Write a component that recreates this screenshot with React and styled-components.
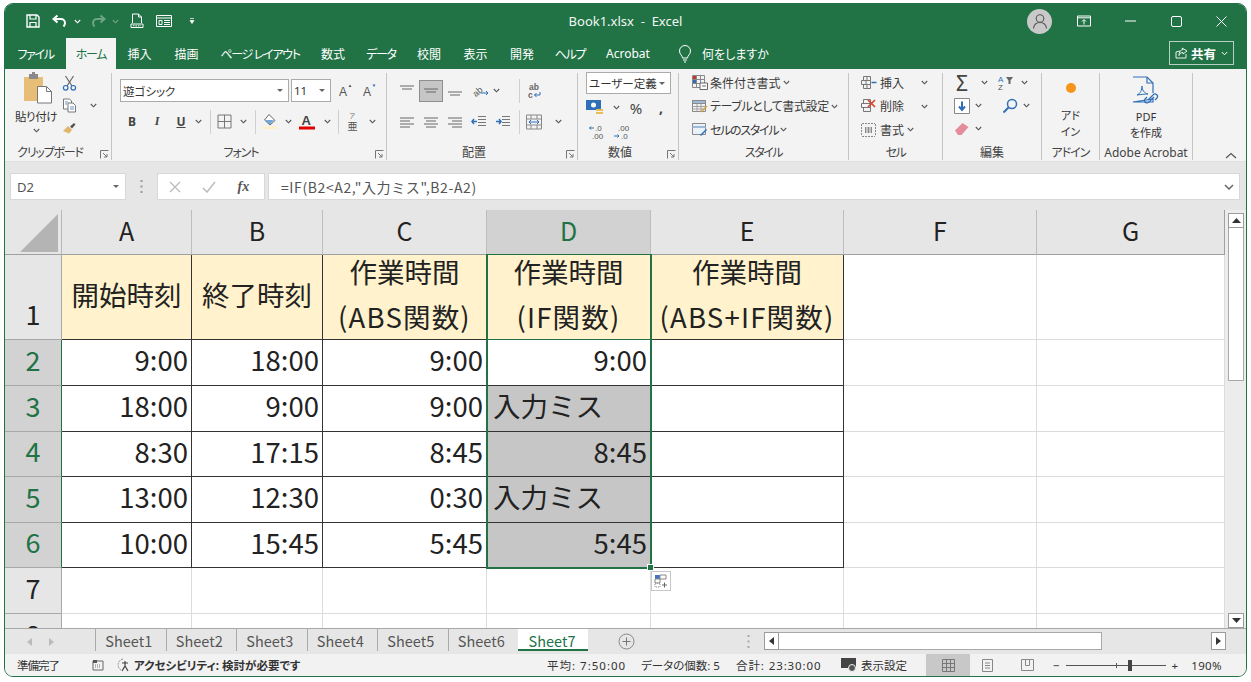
import React from "react";
import styled, { createGlobalStyle } from "styled-components";

const GREEN = "#217346";

const Global = createGlobalStyle`
  html, body { margin: 0; padding: 0; background: #fff; overflow: hidden; }
  body { font-family: "Noto Sans", "Noto Sans CJK JP", sans-serif; font-feature-settings: "palt"; }
`;

const Win = styled.div`
  width: 1243px;
  height: 674px;
  margin: 3px 0 0 4px;
  box-sizing: border-box;
  border: 1px solid ${GREEN};
  border-radius: 9px;
  overflow: hidden;
  display: flex;
  flex-direction: column;
  background: #e6e6e6;
`;

/* title bar */
const TitleBar = styled.div`
  height: 34px;
  flex: none;
  background: ${GREEN};
  color: #fff;
  display: grid;
  grid-template-columns: 1fr auto 1fr;
  align-items: center;
`;
const Qat = styled.div`
  display: flex;
  align-items: center;
  padding-left: 19px;
`;
const QatSlot = styled.span`
  width: ${(p) => p.$w}px;
  display: flex;
  justify-content: center;
  align-items: center;
  opacity: ${(p) => (p.$off ? 0.35 : 1)};
`;
const Title = styled.div`
  font-size: 13px;
  white-space: pre;
  color: #f2f7f4;
`;
const WinBtns = styled.div`
  display: flex;
  justify-content: flex-end;
  align-items: center;
`;
const Avatar = styled.span`
  width: 25px;
  height: 25px;
  border-radius: 50%;
  background: #c9c9c9;
  display: flex;
  align-items: center;
  justify-content: center;
  margin-right: 9px;
`;
const WinBtn = styled.span`
  width: 46px;
  display: flex;
  justify-content: center;
  align-items: center;
  &:last-child { width: 44px; padding-right: 3px; }
`;

/* ribbon tabs */
const TabBar = styled.div`
  height: 31px;
  flex: none;
  background: ${GREEN};
  display: flex;
  align-items: stretch;
`;
const RibTab = styled.div`
  width: ${(p) => p.$w}px;
  font-size: 12px;
  display: flex;
  align-items: center;
  justify-content: center;
  white-space: pre;
  letter-spacing: ${(p) => (p.$tight ? "-1.300px" : "0")};
  color: ${(p) => (p.$active ? GREEN : "#fff")};
  background: ${(p) => (p.$active ? "#f3f3f3" : "transparent")};
`;
const TellMe = styled.div`
  display: flex;
  align-items: center;
  gap: 10px;
  margin-left: 17px;
  font-size: 12px;
  color: #fff;
`;
const Share = styled.div`
  margin: 3px 12px 4px auto;
  width: 65px;
  box-sizing: border-box;
  border: 1px solid #b7d0c2;
  display: flex;
  align-items: center;
  justify-content: center;
  gap: 3px;
  color: #fff;
  font-size: 12.5px;
  font-weight: 700;
`;

/* ribbon body */
const Ribbon = styled.div`
  height: 93px;
  flex: none;
  background: #f3f3f3;
  display: flex;
  color: #333;
  font-size: 12px;
  position: relative;
  box-shadow: inset 0 -1px 0 #e0e0e0;
`;
const Group = styled.div`
  width: ${(p) => p.$w}px;
  flex: none;
  box-sizing: border-box;
  margin: 4px 0 2px;
  border-right: 1px solid #c4c4c4;
  display: flex;
  flex-direction: column;
  position: relative;
`;
const GroupBody = styled.div`
  flex: 1;
  min-height: 0;
  display: flex;
  flex-direction: ${(p) => p.$dir || "column"};
  padding: ${(p) => p.$pad || "0"};
  margin-top: ${(p) => p.$mt || 0}px;
  gap: ${(p) => p.$gap || 0}px;
`;
const GroupFoot = styled.div`
  height: 14px;
  line-height: 14px;
  font-size: 12px;
  text-align: center;
  color: #444;
  white-space: nowrap;
  position: relative;
  padding-right: ${(p) => p.$pr || 0}px;
  letter-spacing: ${(p) => p.$track || 0}px;
`;
const Launcher = styled.span`
  position: absolute;
  right: 2px;
  bottom: 1px;
  display: flex;
`;
const Row = styled.div`
  display: flex;
  align-items: center;
  height: ${(p) => p.$h || 23}px;
  margin-top: ${(p) => p.$mt || 0}px;
`;
const Slot = styled.span`
  width: ${(p) => p.$w}px;
  height: 22px;
  flex: none;
  display: flex;
  align-items: center;
  justify-content: center;
  background: ${(p) => (p.$on ? "#c6c6c6" : "transparent")};
  box-shadow: ${(p) => (p.$on ? "inset 0 0 0 1px #8f8f8f" : "none")};
  font-family: ${(p) => (p.$serif ? '"Liberation Serif", serif' : "inherit")};
  font-weight: ${(p) => (p.$bold ? 700 : 400)};
  font-style: ${(p) => (p.$italic ? "italic" : "normal")};
  text-decoration: ${(p) => (p.$under ? "underline" : "none")};
  font-size: ${(p) => p.$size || 12}px;
  color: #444;
`;
const VSep = styled.span`
  width: 1px;
  height: 24px;
  background: #d0d0d0;
  flex: none;
  margin: 0 ${(p) => p.$m || 0}px;
`;
const Select = styled.div`
  width: ${(p) => p.$w}px;
  height: ${(p) => p.$h || 23}px;
  box-sizing: border-box;
  flex: none;
  margin-left: ${(p) => p.$ml || 0}px;
  background: #fff;
  border: 1px solid #ababab;
  display: flex;
  align-items: center;
  justify-content: space-between;
  padding: 0 5px 0 2px;
  font-size: 11.5px;
  color: #333;
  white-space: nowrap;
`;
const Caret = styled.i`
  width: 0;
  height: 0;
  border-left: 3px solid transparent;
  border-right: 3px solid transparent;
  border-top: 3px solid #666;
`;
const PasteCol = styled.div`
  width: 48px;
  margin-left: 7px;
  flex: none;
  display: flex;
  flex-direction: column;
  align-items: center;
  font-size: 11.5px;
  white-space: nowrap;
  color: #333;
`;
const PasteFace = styled.span`
  display: flex;
  margin-left: 4px;
`;
const PasteLabel = styled.span`
  margin-top: 5px;
  line-height: 16px;
  margin-bottom: 3px;
  letter-spacing: -0.4px;
`;
const ToolCol = styled.div`
  display: flex;
  flex-direction: column;
`;
const TextRow = styled.div`
  height: 23.5px;
  flex: none;
  display: flex;
  align-items: center;
  gap: ${(p) => p.$gap || 2}px;
  white-space: nowrap;
  font-size: 12px;
  color: #3a3a3a;
  letter-spacing: ${(p) => p.$track || 0}px;
`;
const Stacked = styled.div`
  display: flex;
  flex-direction: column;
  align-items: center;
  font-size: 11px;
  line-height: 16px;
  color: #333;
  padding-top: ${(p) => p.$top}px;
`;
const StackGap = styled.span`
  height: ${(p) => p.$h}px;
`;
const Collapse = styled.span`
  position: absolute;
  right: 9px;
  bottom: 3px;
  display: flex;
`;

/* formula bar */
const FormulaBand = styled.div`
  height: 48px;
  flex: none;
  background: #e6e6e6;
  display: flex;
  align-items: flex-start;
  padding: 11px 6px 0 5px;
  box-sizing: border-box;
`;
const NameBox = styled.div`
  width: 116px;
  height: 27px;
  box-sizing: border-box;
  background: #fff;
  border: 1px solid #d8d8d8;
  display: flex;
  align-items: center;
  justify-content: space-between;
  padding: 0 6px;
  font-size: 13px;
  color: #555;
`;
const Dots = styled.span`
  width: 31px;
  height: 27px;
  display: flex;
  align-items: center;
  justify-content: center;
`;
const FxBox = styled.div`
  width: 108px;
  height: 27px;
  box-sizing: border-box;
  background: #fff;
  border: 1px solid #d8d8d8;
  display: flex;
  align-items: center;
  justify-content: space-around;
  padding: 0 4px 0 0;
  color: #666;
`;
const FxLabel = styled.span`
  font-family: "Liberation Serif", serif;
  font-style: italic;
  font-weight: 700;
  font-size: 14px;
  color: #555;
`;
const FormulaInput = styled.div`
  flex: 1;
  height: 27px;
  margin-left: 3px;
  box-sizing: border-box;
  background: #fff;
  border: 1px solid #d8d8d8;
  display: flex;
  align-items: center;
  justify-content: space-between;
  padding: 0 5px 0 12px;
  font-family: "Noto Sans CJK JP", sans-serif;
  font-feature-settings: normal;
  font-size: 14px;
  letter-spacing: 0.6px;
  color: #555;
`;

/* sheet */
const SheetArea = styled.div`
  height: 418px;
  flex: none;
  display: flex;
  background: #e6e6e6;
`;
const SheetGrid = styled.div`
  width: 1220px;
  flex: none;
  display: grid;
  grid-template-columns: ${(p) => p.$cols};
  grid-template-rows: ${(p) => p.$rows};
  overflow: hidden;
  position: relative;
  background: #fff;
  font-family: "Noto Sans CJK JP", sans-serif;
  font-feature-settings: normal;
  color: #222;
`;
const Corner = styled.div`
  background: #e6e6e6;
  border-right: 1px solid #b8b8b8;
  border-bottom: 1px solid #a0a0a0;
  display: flex;
  align-items: flex-end;
  justify-content: flex-end;
  padding: 0 3px 2px 0;
`;
const ColHead = styled.div`
  background: ${(p) => (p.$sel ? "#d2d2d2" : "#e6e6e6")};
  color: ${(p) => (p.$sel ? GREEN : "#222")};
  border-right: 1px solid ${(p) => (p.$last ? "#a0a0a0" : "#bdbdbd")};
  border-bottom: 1px solid ${(p) => (p.$sel ? GREEN : "#a0a0a0")};
  box-sizing: border-box;
  padding-bottom: 4px;
  font-size: 25px;
  display: flex;
  align-items: center;
  justify-content: center;
`;
const RowHead = styled.div`
  background: ${(p) => (p.$sel ? "#d2d2d2" : "#e6e6e6")};
  color: ${(p) => (p.$sel ? GREEN : "#222")};
  border-right: 1px solid ${(p) => (p.$sel ? GREEN : "#a8a8a8")};
  border-bottom: 1px solid #a8a8a8;
  font-size: 27px;
  line-height: 42px;
  padding-bottom: ${(p) => (p.$bottom ? 4 : 6)}px;
  display: flex;
  align-items: ${(p) => (p.$bottom ? "flex-end" : "center")};
  justify-content: center;
  box-sizing: border-box;
`;
const Cell = styled.div`
  box-sizing: border-box;
  background: ${(p) => p.$bg};
  border-right: 1px solid ${(p) => p.$line};
  border-bottom: 1px solid ${(p) => p.$line};
  font-size: 27.5px;
  line-height: 45px;
  white-space: nowrap;
  display: flex;
  flex-direction: column;
  justify-content: center;
  align-items: ${(p) => (p.$align === "right" ? "flex-end" : p.$align === "left" ? "flex-start" : "center")};
  padding: ${(p) => (p.$align === "right" ? "0 3px 6px 0" : p.$align === "left" ? "0 0 6px 6px" : "0 0 6px 0")};
`;
const HeadLine = styled.span`
  letter-spacing: ${(p) => (p.$wide ? "1.200px" : "0")};
`;
const Selection = styled.div`
  position: absolute;
  grid-column: 5 / 6;
  grid-row: 2 / 8;
  inset: -1px -1px -1px -1px;
  border: 2px solid ${GREEN};
  border-top-width: 1px;
  pointer-events: none;
`;
const FillHandle = styled.span`
  position: absolute;
  right: -4px;
  bottom: -4px;
  width: 5px;
  height: 5px;
  background: ${GREEN};
  border: 1px solid #fff;
`;
const QuickAnalysis = styled.span`
  position: absolute;
  left: 646px;
  top: 361px;
  width: 20px;
  height: 20px;
  box-sizing: border-box;
  background: #fff;
  border: 1px solid #c8c8c8;
  display: flex;
  align-items: center;
  justify-content: center;
`;

const VScroll = styled.div`
  flex: 1;
  display: flex;
  flex-direction: column;
  padding: 3px 2px 0 3px;
  background: #ececec;
`;
const ScrollBtn = styled.span`
  height: 15px;
  flex: none;
  box-sizing: border-box;
  background: #fff;
  border: 1px solid #9c9c9c;
  display: flex;
  align-items: center;
  justify-content: center;
`;
const VThumb = styled.span`
  height: 153px;
  box-sizing: border-box;
  background: #fff;
  border: 1px solid #a8a8a8;
  border-top: none;
  flex: none;
`;
const Spacer = styled.span`
  flex: 1;
`;

/* sheet tabs */
const SheetTabs = styled.div`
  height: 26px;
  flex: none;
  background: #e6e6e6;
  border-top: 1px solid #a8a8a8;
  box-sizing: border-box;
  display: flex;
  align-items: stretch;
  font-size: 14px;
  color: #555;
`;
const TabNav = styled.div`
  width: 90px;
  flex: none;
  display: flex;
  align-items: center;
  gap: 17px;
  padding-left: 22px;
  box-sizing: border-box;
`;
const SheetTab = styled.div`
  width: ${(p) => p.$w}px;
  flex: none;
  display: flex;
  align-items: center;
  justify-content: center;
  box-sizing: border-box;
  margin-bottom: 3px;
  padding-right: ${(p) => (p.$active ? 2 : 4)}px;
  border-left: ${(p) => (p.$active ? "none" : "1px solid #aaa")};
  background: ${(p) => (p.$active ? "#fff" : "transparent")};
  color: ${(p) => (p.$active ? GREEN : "#555")};
  box-shadow: ${(p) => (p.$active ? `inset 0 -2px 0 ${GREEN}` : "none")};
  font-family: "Noto Sans CJK JP", sans-serif;
  font-feature-settings: normal;
  font-size: 14.5px;
`;
const AddSheet = styled.span`
  width: 76px;
  flex: none;
  display: flex;
  align-items: center;
  justify-content: center;
`;
const TabDots = styled.span`
  width: 32px;
  flex: none;
  margin-left: 68px;
  display: flex;
  align-items: center;
  justify-content: center;
`;
const HScroll = styled.div`
  flex: none;
  width: 462px;
  display: flex;
  align-items: center;
  margin-top: -1px;
`;
const HBtn = styled.span`
  width: 15px;
  height: 18px;
  flex: none;
  box-sizing: border-box;
  background: #fff;
  border: 1px solid #9c9c9c;
  display: flex;
  align-items: center;
  justify-content: center;
`;
const HThumb = styled.span`
  width: 323px;
  height: 18px;
  box-sizing: border-box;
  background: #fff;
  border: 1px solid #a8a8a8;
  border-left: none;
  flex: none;
`;

/* status bar */
const StatusBar = styled.div`
  flex: 1;
  min-height: 0;
  background: #f2f2f2;
  display: flex;
  align-items: center;
  font-size: 11.5px;
  color: #333;
  white-space: nowrap;
`;
const StatusItem = styled.span`
  margin-left: ${(p) => p.$ml || 0}px;
  width: ${(p) => (p.$w ? `${p.$w}px` : "auto")};
  flex: none;
  display: flex;
  align-items: center;
  gap: ${(p) => p.$gap || 0}px;
  font-weight: ${(p) => (p.$bold ? 700 : 400)};
  letter-spacing: ${(p) => p.$track || 0}px;
`;
const ViewBtn = styled.span`
  width: ${(p) => p.$w || 40}px;
  align-self: stretch;
  flex: none;
  display: flex;
  align-items: center;
  justify-content: center;
  background: ${(p) => (p.$on ? "#c8c8c8" : "transparent")};
`;
const Zoom = styled.div`
  width: 100px;
  height: 1px;
  background: #555;
  position: relative;
  margin: 0 6px;
  flex: none;
`;
const ZoomMark = styled.span`
  position: absolute;
  left: 50px;
  top: -2px;
  width: 1px;
  height: 5px;
  background: #555;
`;
const ZoomThumb = styled.span`
  position: absolute;
  left: 62px;
  top: -5px;
  width: 4px;
  height: 11px;
  background: #444;
`;

/* icons */
const Svg = ({ w = 16, h = 16, children, ...rest }) => (
  <svg width={w} height={h} viewBox={`0 0 ${w} ${h}`} fill="none" style={{ flex: "none" }} {...rest}>
    {children}
  </svg>
);
const Chev = ({ c = "#555" }) => (
  <Svg w={7} h={5}>
    <path d="M.8 1 3.500 3.800 6.200 1" stroke={c} strokeWidth="1.100" />
  </Svg>
);
const Lines = ({ rows }) => (
  <Svg w={16} h={14}>
    {rows.map(([x1, x2, y], i) => (
      <path key={i} d={`M${x1} ${y}H${x2}`} stroke="#666" />
    ))}
  </Svg>
);
const Launch = () => (
  <Svg w={9} h={9}>
    <path d="M.5 8.500V.5h8M3 3l4 4M7 4v3H4" stroke="#777" />
  </Svg>
);

const SaveIcon = () => (
  <Svg w={14} h={14}>
    <path d="M1 1h10l2 2v10H1z" stroke="#fff" strokeWidth="1.400" />
    <path d="M4 1v4h6V1M4 13V8.500h6V13" stroke="#fff" strokeWidth="1.200" />
  </Svg>
);
const UndoIcon = ({ c = "#fff" }) => (
  <Svg w={16} h={14}>
    <path d="M5.500 1.500 1.500 5l4 3.500" stroke={c} strokeWidth="2" />
    <path d="M2 5h7a4 4 0 0 1 4 4c0 1.500-.6 2.500-1.500 3.500" stroke={c} strokeWidth="2" />
  </Svg>
);
const PreviewIcon = () => (
  <Svg w={14} h={16}>
    <path d="M2.500 10V1h6l3 3v6M8.500 1v3h3" stroke="#fff" />
    <path d="M1 11h12v3.500H1z" stroke="#fff" />
    <path d="M3 12.800h8" stroke="#fff" strokeDasharray="1.500 1" />
  </Svg>
);
const FormIcon = () => (
  <Svg w={16} h={14}>
    <path d="M.5 1.500h15v11H.5z" stroke="#fff" />
    <path d="M.5 4h15M3 6.500h3v4H3zM8 6.500h6M8 8.500h6M8 10.500h6" stroke="#fff" />
  </Svg>
);
const PasteIcon = () => (
  <Svg w={30} h={33}>
    <path d="M1 6h19v24H1z" fill="#e8bd78" />
    <path d="M6 3h9v5H6z" fill="#8a8a8a" />
    <path d="M9 1h3v3H9z" fill="#8a8a8a" />
    <path d="M14.500 15.500h9l5 5v11.500h-14z" fill="#fff" stroke="#777" />
    <path d="M23.500 15.500v5h5" stroke="#777" />
  </Svg>
);
const ScissorsIcon = () => (
  <Svg w={15} h={16}>
    <path d="m3.500 1 6.500 10M11.500 1 5 11" stroke="#666" strokeWidth="1.200" />
    <circle cx="3.700" cy="12.800" r="2.300" stroke="#2f6fb7" strokeWidth="1.200" />
    <circle cx="11.300" cy="12.800" r="2.300" stroke="#2f6fb7" strokeWidth="1.200" />
  </Svg>
);
const CopyIcon = () => (
  <Svg w={15} h={15}>
    <path d="M1.500 1h6l2 2v8h-8z" fill="#fff" stroke="#777" />
    <path d="M6 5h5l2.500 2.500V14H6z" fill="#fff" stroke="#777" />
    <path d="M3 4h3M3 6h2M8 9h4M8 11h4" stroke="#6a93c4" />
  </Svg>
);
const BrushIcon = () => (
  <Svg w={15} h={13}>
    <path d="M1 9 6 4l4 4-3 3.500z" fill="#e0b56c" />
    <path d="m8 4.500 4-3.500 1.500 1.500L10 6.500z" fill="#555" />
  </Svg>
);
const GrowA = ({ up }) => (
  <Svg w={15} h={15}>
    <text x="0" y="13" fontSize="12" fill="#555" fontFamily="Liberation Sans">A</text>
    <path d={up ? "M9.500 4 11 1.500 12.500 4z" : "M9.500 1.500 11 4l1.500-2.500z"} fill={up ? "#555" : "#2f6fb7"} />
  </Svg>
);
const BorderIcon = () => (
  <Svg w={15} h={15}>
    <path d="M1 1h13v13H1zM7.500 1v13M1 7.500h13" stroke="#777" />
  </Svg>
);
const FillIcon = () => (
  <Svg w={16} h={17}>
    <path d="m7 1.500 6 6-5 4.500-5.500-5z" fill="#fff" stroke="#666" />
    <path d="M3 7h9l-4 4.500z" fill="#6fa8dc" />
    <path d="M0 13.500h15V16H0z" fill="#fdf0c4" />
  </Svg>
);
const FontColorIcon = () => (
  <Svg w={16} h={17}>
    <text x="2.500" y="12" fontSize="13" fontWeight="700" fill="#444" fontFamily="Liberation Sans">A</text>
    <path d="M0 13.500h16V16.500H0z" fill="#e00000" />
  </Svg>
);
const PhoneticIcon = () => (
  <Svg w={13} h={20}>
    <text x="3.500" y="6" fontSize="6" fill="#666" fontFamily="Noto Sans CJK JP">ア</text>
    <text x="1.500" y="18" fontSize="10" fill="#555" fontFamily="Noto Sans CJK JP">亜</text>
  </Svg>
);
const OrientIcon = () => (
  <Svg w={18} h={16}>
    <text x="1" y="12" fontSize="9" fill="#555" transform="rotate(-40 6 8)" fontFamily="Liberation Sans">ab</text>
    <path d="M10 10h7m-2-2 2 2-2 2" stroke="#2f6fb7" />
  </Svg>
);
const WrapIcon = () => (
  <Svg w={15} h={18}>
    <text x="2" y="8" fontSize="8.500" fontWeight="700" fill="#666" fontFamily="Liberation Sans">ab</text>
    <text x="1" y="16" fontSize="8.500" fontWeight="700" fill="#666" fontFamily="Liberation Sans">c</text>
    <path d="M13 10v3H7.500m2-2-2 2 2 2" stroke="#2f6fb7" />
  </Svg>
);
const IndentIcon = ({ rev }) => (
  <Svg w={16} h={13}>
    <path d="M7 1.500h8M7 4.500h8M7 7.500h8M7 10.500h8" stroke="#777" />
    <path d={rev ? "M6 6.500H1m2-2.500-2 2.500 2 2.500" : "M1 6.500h5m-2-2.500 2 2.500-2 2.500"} stroke="#2f6fb7" strokeWidth="1.500" />
  </Svg>
);
const MergeIcon = () => (
  <Svg w={16} h={16}>
    <path d="M.5 1h15v14H.5zM.5 5h15M.5 11h15M5 1v4M11 1v4M5 11v4M11 11v4" stroke="#888" />
    <path d="M3 8h10M5 6 3 8l2 2M11 6l2 2-2 2" stroke="#2f6fb7" />
  </Svg>
);
const CurrencyIcon = () => (
  <Svg w={18} h={17}>
    <path d="M0 1h15v10H0z" fill="#2f6fb7" />
    <circle cx="7.500" cy="6" r="2.500" fill="#fff" />
    <path d="M10 10h7v2h-7zM10 13h7v2h-7z" fill="#e8bd5a" />
  </Svg>
);
const DecIcon = ({ more }) => (
  <Svg w={18} h={18}>
    <text x={more ? 6 : 5} y="8" fontSize="8" fill="#555" fontFamily="Liberation Sans">{more ? ".0" : ".00"}</text>
    <text x={more ? 3 : 8} y="16" fontSize="8" fill="#555" fontFamily="Liberation Sans">{more ? ".00" : ".0"}</text>
    {more ? (
      <path d="M5 5H.5m1.500-1.500L.5 5 2 6.500" stroke="#2f6fb7" />
    ) : (
      <path d="M1 13h5M4.500 11.500 6 13l-1.500 1.500" stroke="#2f6fb7" />
    )}
  </Svg>
);
const CondIcon = () => (
  <Svg w={16} h={15}>
    <path d="M.5.500h12v12H.5zM.5 4.500h12M.5 8.500h12M4.500.500v12M8.500.500v12" stroke="#888" />
    <path d="M1 1h3v3H1z" fill="#c0392b" />
    <path d="M1 5h3v3H1z" fill="#2f6fb7" />
    <path d="M8 8h7.500v6.500H8z" fill="#fff" stroke="#666" />
    <path d="M10 11h4" stroke="#666" />
  </Svg>
);
const TableIcon = () => (
  <Svg w={16} h={15}>
    <path d="M.5 1.500h13v11H.5z" stroke="#888" />
    <path d="M.5 1.500h13v3H.5z" fill="#9fbad6" stroke="#888" />
    <path d="M.5 7.500h13M.5 10h13M5 4.500v8M9 4.500v8" stroke="#a0a0a0" />
    <path d="m8.500 12.500 6-6 1 1-6 6z" fill="#d8a23f" />
  </Svg>
);
const CellStyleIcon = () => (
  <Svg w={16} h={15}>
    <path d="M.5 1.500h13v11H.5z" fill="#eaf1f8" stroke="#888" />
    <path d="M.5 5h13" stroke="#9fbad6" strokeWidth="2" />
    <path d="m8 13 6-6 1 1-6 6z" fill="#2f6fb7" />
  </Svg>
);
const InsertIcon = () => (
  <Svg w={17} h={16}>
    <path d="M3.500 1.500h7v4h-7zM1.500 5.500h9v4h-9zM3.500 9.500h7v4h-7zM7 1.500v4M6 5.500v4M7 9.500v4" stroke="#777" />
    <path d="M16.500 7.500h-5" stroke="#2f6fb7" strokeWidth="1.500" />
  </Svg>
);
const DeleteIcon = () => (
  <Svg w={17} h={16}>
    <path d="M3.500 1.500h7v4h-7zM1.500 5.500h9v4h-9zM3.500 9.500h7v4h-7z" stroke="#777" />
    <path d="m8 2 7 7m0-7-7 7" stroke="#d2452f" strokeWidth="1.700" />
  </Svg>
);
const FormatIcon = () => (
  <Svg w={17} h={16}>
    <path d="M2 1.500h13M2 14.500h13M1.500 2v12M15.500 2v12" stroke="#888" strokeDasharray="2 1" />
    <path d="M5 5h7v6H5z" fill="#8a8a8a" />
    <path d="M7 5v6M10 5v6" stroke="#fff" />
  </Svg>
);
const SortIcon = () => (
  <Svg w={16} h={17}>
    <text x="0" y="7.500" fontSize="8" fill="#2f6fb7" fontFamily="Liberation Sans">A</text>
    <text x="0" y="15.500" fontSize="8" fill="#555" fontFamily="Liberation Sans">Z</text>
    <path d="M8 3h7l-2.500 3.500V10h-2V6.500z" fill="#666" />
  </Svg>
);
const FillDownIcon = () => (
  <Svg w={16} h={16}>
    <path d="M.5.500h15v15H.5z" fill="#fff" stroke="#888" />
    <path d="M8 3.500v8M5 8.500l3 3.500 3-3.500" stroke="#2f6fb7" strokeWidth="2" />
  </Svg>
);
const SearchIcon = () => (
  <Svg w={16} h={16}>
    <circle cx="10" cy="6" r="4.500" stroke="#2f6fb7" strokeWidth="1.500" />
    <path d="M6.500 9.500 1.500 14.500" stroke="#2f6fb7" strokeWidth="2" />
  </Svg>
);
const EraserIcon = () => (
  <Svg w={16} h={14}>
    <path d="M1 8.500 8.500 1l6 4-7 8H4z" fill="#e58c9a" />
  </Svg>
);
const PdfIcon = () => (
  <Svg w={28} h={30}>
    <path d="M1 1h14l6 6v10M21 23v3H1z" stroke="#2f6fb7" strokeWidth="1.200" />
    <path d="M15 1v6h6" stroke="#2f6fb7" strokeWidth="1.200" />
    <path d="M5 19c3-1 5-5 5-9 0 4 2 7 6 8-3 0-7 .5-11 1z" stroke="#2f6fb7" />
    <path d="m16 24 5-5a2.500 2.500 0 0 1 4 3l-2 2M22 21l-5 5a2.500 2.500 0 0 1-4-3l2-2" stroke="#2f6fb7" strokeWidth="1.200" />
  </Svg>
);

const COLS = ["A", "B", "C", "D", "E", "F", "G"];
const COL_W = [130, 131, 164, 164, 193, 193, 188];
const ROW_H = [45, 85, 46, 46, 45, 46, 45, 46, 46];
const BLACK = "#333";
const GRID = "#dcdcdc";

const HEAD = [["開始時刻"], ["終了時刻"], ["作業時間", "(ABS関数)"], ["作業時間", "(IF関数)"], ["作業時間", "(ABS+IF関数)"]];
const DATA = [
  ["9:00", "18:00", "9:00", "9:00", ""],
  ["18:00", "9:00", "9:00", "入力ミス", ""],
  ["8:30", "17:15", "8:45", "8:45", ""],
  ["13:00", "12:30", "0:30", "入力ミス", ""],
  ["10:00", "15:45", "5:45", "5:45", ""],
];

function Sheet() {
  const cells = [];
  // row 1
  cells.push(<RowHead key="r1" $bottom>1</RowHead>);
  COLS.forEach((c, i) => {
    if (i < 5) {
      cells.push(
        <Cell key={c + "1"} $bg="#fff2cc" $line={i === 3 ? GREEN : BLACK} $align="center">
          {HEAD[i].map((t) => (
            <HeadLine key={t} $wide={t.startsWith("(")}>{t}</HeadLine>
          ))}
        </Cell>
      );
    } else {
      cells.push(<Cell key={c + "1"} $bg="#fff" $line={GRID} />);
    }
  });
  // rows 2-6
  DATA.forEach((row, r) => {
    cells.push(
      <RowHead key={"r" + (r + 2)} $sel>
        {r + 2}
      </RowHead>
    );
    COLS.forEach((c, i) => {
      if (i < 5) {
        const v = row[i];
        const gray = i === 3 && r > 0;
        cells.push(
          <Cell key={c + r} $bg={gray ? "#c6c6c6" : "#fff"} $line={BLACK} $align={v === "入力ミス" ? "left" : "right"}>
            {v}
          </Cell>
        );
      } else {
        cells.push(<Cell key={c + r} $bg="#fff" $line={GRID} />);
      }
    });
  });
  // rows 7-8
  [7, 8].forEach((n) => {
    cells.push(<RowHead key={"r" + n}>{n}</RowHead>);
    COLS.forEach((c) => cells.push(<Cell key={c + n} $bg="#fff" $line={GRID} />));
  });

  return (
    <SheetGrid $cols={`57px ${COL_W.map((w) => w + "px").join(" ")}`} $rows={ROW_H.map((h) => h + "px").join(" ")}>
      <Corner>
        <Svg w={38} h={38}>
          <path d="M38 0v38H0z" fill="#b4b4b4" />
        </Svg>
      </Corner>
      {COLS.map((c, i) => (
        <ColHead key={c} $sel={c === "D"} $last={i === 6}>
          {c}
        </ColHead>
      ))}
      {cells}
      <Selection>
        <FillHandle />
      </Selection>
      <QuickAnalysis>
        <Svg w={14} h={14}>
          <path d="M1 1h5v4H1z" fill="#4472c4" />
          <path d="M6 1h6v4H6zM1 5h5v4H1z" stroke="#888" />
          <path d="M1 9h5v4H1z" stroke="#888" strokeDasharray="1 1" />
          <path d="M8 11h5M10.500 8.500v5" stroke="#666" />
        </Svg>
      </QuickAnalysis>
    </SheetGrid>
  );
}

function RibbonBody() {
  return (
    <Ribbon>
      <Group $w={107}>
        <GroupBody $dir="row" $mt={-2}>
          <PasteCol>
            <PasteFace><PasteIcon /></PasteFace>
            <PasteLabel>貼り付け</PasteLabel>
            <Chev />
          </PasteCol>
          <ToolCol>
            <Row>
              <Slot $w={18}><ScissorsIcon /></Slot>
            </Row>
            <Row>
              <Slot $w={18}><CopyIcon /></Slot>
              <Slot $w={30}><Chev /></Slot>
            </Row>
            <Row>
              <Slot $w={18}><BrushIcon /></Slot>
            </Row>
          </ToolCol>
        </GroupBody>
        <GroupFoot $pr={16} $track={-1.2}>
          クリップボード
          <Launcher><Launch /></Launcher>
        </GroupFoot>
      </Group>

      <Group $w={275}>
        <GroupBody $pad="6px 0 0 8px" $gap={8}>
          <Row>
            <Select $w={169}>
              遊ゴシック <Caret />
            </Select>
            <Select $w={40} $ml={2}>
              11 <Caret />
            </Select>
            <Slot $w={26} style={{ paddingLeft: 2 }}><GrowA up /></Slot>
            <Slot $w={22}><GrowA /></Slot>
          </Row>
          <Row>
            <Slot $w={24} $bold>B</Slot>
            <Slot $w={26} $italic $serif $bold>I</Slot>
            <Slot $w={22} $bold $under>U</Slot>
            <Slot $w={12}><Chev /></Slot>
            <VSep $m={6} />
            <Slot $w={14}><BorderIcon /></Slot>
            <Slot $w={24}><Chev /></Slot>
            <VSep />
            <Slot $w={28}><FillIcon /></Slot>
            <Slot $w={8}><Chev /></Slot>
            <Slot $w={30}><FontColorIcon /></Slot>
            <Slot $w={10}><Chev /></Slot>
            <VSep $m={6} />
            <Slot $w={14}><PhoneticIcon /></Slot>
            <Slot $w={26}><Chev /></Slot>
          </Row>
        </GroupBody>
        <GroupFoot $pr={16} $track={-1}>
          フォント
          <Launcher><Launch /></Launcher>
        </GroupFoot>
      </Group>

      <Group $w={191}>
        <GroupBody $pad="6px 0 0 8px" $gap={8}>
          <Row>
            <Slot $w={24}><Lines rows={[[1, 15, 2], [3, 13, 5]]} /></Slot>
            <Slot $w={24} $on><Lines rows={[[1, 15, 5], [3, 13, 8]]} /></Slot>
            <Slot $w={24}><Lines rows={[[1, 15, 8], [3, 13, 11]]} /></Slot>
            <Slot $w={26}><OrientIcon /></Slot>
            <Slot $w={6}><Chev /></Slot>
            <Slot $w={20} />
            <VSep />
            <Slot $w={28}><WrapIcon /></Slot>
          </Row>
          <Row>
            <Slot $w={24}><Lines rows={[[1, 15, 3], [1, 11, 6], [1, 15, 9], [1, 11, 12]]} /></Slot>
            <Slot $w={24}><Lines rows={[[1, 15, 3], [3, 13, 6], [1, 15, 9], [3, 13, 12]]} /></Slot>
            <Slot $w={24}><Lines rows={[[1, 15, 3], [5, 15, 6], [1, 15, 9], [5, 15, 12]]} /></Slot>
            <Slot $w={23}><IndentIcon rev /></Slot>
            <Slot $w={25}><IndentIcon /></Slot>
            <Slot $w={4} />
            <VSep />
            <Slot $w={28}><MergeIcon /></Slot>
            <Slot $w={20}><Chev /></Slot>
          </Row>
        </GroupBody>
        <GroupFoot $pr={16}>
          配置
          <Launcher><Launch /></Launcher>
        </GroupFoot>
      </Group>

      <Group $w={101}>
        <GroupBody $pad="0 0 0 8px" $mt={-1}>
          <Select $w={85} $h={22}>
            ユーザー定義 <Caret />
          </Select>
          <Row $mt={1} $h={25}>
            <Slot $w={18}><CurrencyIcon /></Slot>
            <Slot $w={24}><Chev /></Slot>
            <Slot $w={16} $size={15}>%</Slot>
            <Slot $w={34} $bold $size={14}>,</Slot>
          </Row>
          <Row $h={24}>
            <Slot $w={24}><DecIcon more /></Slot>
            <Slot $w={24}><DecIcon /></Slot>
          </Row>
        </GroupBody>
        <GroupFoot $pr={16}>
          数値
          <Launcher><Launch /></Launcher>
        </GroupFoot>
      </Group>

      <Group $w={170}>
        <GroupBody $pad="0 0 0 13px" $mt={-2}>
          <TextRow><CondIcon /> 条件付き書式 <Chev /></TextRow>
          <TextRow $track={-0.4}><TableIcon /> テーブルとして書式設定 <Chev /></TextRow>
          <TextRow $track={-1.300}><CellStyleIcon /> セルのスタイル <Chev /></TextRow>
        </GroupBody>
        <GroupFoot $track={-1.500}>スタイル</GroupFoot>
      </Group>

      <Group $w={94}>
        <GroupBody $pad="0 0 0 11px" $mt={-2}>
          <TextRow $gap={3}>
            <InsertIcon /> 挿入 <Slot $w={34}><Chev /></Slot>
          </TextRow>
          <TextRow $gap={3}>
            <DeleteIcon /> 削除 <Slot $w={34}><Chev /></Slot>
          </TextRow>
          <TextRow $gap={3}>
            <FormatIcon /> 書式 <Chev />
          </TextRow>
        </GroupBody>
        <GroupFoot $track={-1.500}>セル</GroupFoot>
      </Group>

      <Group $w={99}>
        <GroupBody $pad="0 0 0 10px" $mt={-2}>
          <Row>
            <Slot $w={18} $size={21}>Σ</Slot>
            <Slot $w={26}><Chev /></Slot>
            <Slot $w={18}><SortIcon /></Slot>
            <Slot $w={18}><Chev /></Slot>
          </Row>
          <Row>
            <Slot $w={18}><FillDownIcon /></Slot>
            <Slot $w={14}><Chev /></Slot>
            <Slot $w={13} />
            <Slot $w={24}><SearchIcon /></Slot>
            <Slot $w={8}><Chev /></Slot>
          </Row>
          <Row>
            <Slot $w={18}><EraserIcon /></Slot>
            <Slot $w={14}><Chev /></Slot>
          </Row>
        </GroupBody>
        <GroupFoot>編集</GroupFoot>
      </Group>

      <Group $w={58}>
        <GroupBody>
          <Stacked $top={9}>
            <Svg w={12} h={12}>
              <circle cx="6" cy="6" r="5" fill="#f7941d" />
            </Svg>
            <StackGap $h={14} />
            <span>アド</span>
            <span>イン</span>
          </Stacked>
        </GroupBody>
        <GroupFoot $track={-1}>アドイン</GroupFoot>
      </Group>

      <Group $w={93}>
        <GroupBody>
          <Stacked $top={3}>
            <PdfIcon />
            <StackGap $h={3} />
            <span>PDF</span>
            <span>を作成</span>
          </Stacked>
        </GroupBody>
        <GroupFoot>Adobe Acrobat</GroupFoot>
      </Group>
      <Collapse>
        <Svg w={12} h={7}>
          <path d="M1 6 6 1.500 11 6" stroke="#555" strokeWidth="1.200" />
        </Svg>
      </Collapse>
    </Ribbon>
  );
}

const RIB_TABS = [
  ["ファイル", 61, true],
  ["ホーム", 50, true],
  ["挿入", 47],
  ["描画", 47],
  ["ページ レイアウト", 100, true],
  ["数式", 46],
  ["データ", 50, true],
  ["校閲", 46],
  ["表示", 47],
  ["開発", 46],
  ["ヘルプ", 50, true],
  ["Acrobat", 66],
];
const SHEETS = ["Sheet1", "Sheet2", "Sheet3", "Sheet4", "Sheet5", "Sheet6"];

export default function App() {
  return (
    <>
      <Global />
      <Win>
        <TitleBar>
          <Qat>
            <QatSlot $w={18}><SaveIcon /></QatSlot>
            <QatSlot $w={9} />
            <QatSlot $w={18}><UndoIcon /></QatSlot>
            <QatSlot $w={16}><Chev c="#fff" /></QatSlot>
            <QatSlot $w={26} $off style={{ transform: "scaleX(-1)" }}><UndoIcon /></QatSlot>
            <QatSlot $w={8} $off><Chev c="#fff" /></QatSlot>
            <QatSlot $w={36}><PreviewIcon /></QatSlot>
            <QatSlot $w={18}><FormIcon /></QatSlot>
            <QatSlot $w={38}>
              <Svg w={6} h={6}>
                <path d="M1 .5h4M1 2.500h4l-2 3z" stroke="#fff" fill="#fff" strokeWidth=".7" />
              </Svg>
            </QatSlot>
          </Qat>
          <Title>Book1.xlsx  -  Excel</Title>
          <WinBtns>
            <Avatar>
              <Svg w={16} h={16}>
                <circle cx="8" cy="5.500" r="3.800" stroke="#555" strokeWidth="1.100" />
                <path d="M1.500 15.500c.5-4 3-6 6.500-6s6 2 6.500 6" stroke="#555" strokeWidth="1.100" />
              </Svg>
            </Avatar>
            <WinBtn>
              <Svg w={14} h={12}>
                <path d="M.5 1h13v10H.5zM.5 2.800h13M7 9.500V5M5 6.500l2-2 2 2" stroke="#fff" />
              </Svg>
            </WinBtn>
            <WinBtn>
              <Svg w={11} h={2}>
                <path d="M0 1h11" stroke="#fff" />
              </Svg>
            </WinBtn>
            <WinBtn>
              <Svg w={11} h={11}>
                <rect x=".5" y=".5" width="10" height="10" rx="1.500" stroke="#fff" />
              </Svg>
            </WinBtn>
            <WinBtn>
              <Svg w={11} h={11}>
                <path d="m.5.500 10 10m0-10-10 10" stroke="#fff" />
              </Svg>
            </WinBtn>
          </WinBtns>
        </TitleBar>

        <TabBar>
          {RIB_TABS.map(([t, w, tight]) => (
            <RibTab key={t} $w={w} $tight={tight} $active={t === "ホーム"}>
              {t}
            </RibTab>
          ))}
          <TellMe>
            <Svg w={14} h={18}>
              <path d="M4.500 13c0-2.500-3-3.500-3-7a5.500 5.500 0 0 1 11 0c0 3.500-3 4.500-3 7zM5 15h4M6 17h2" stroke="#fff" />
            </Svg>
            何をしますか
          </TellMe>
          <Share>
            <Svg w={13} h={12}>
              <path d="M1 5v6h10V7M1 5l4-1M7 1l5 3-4 3V5.500C5.500 5.500 4.500 7 4 8.500 4 5 5.500 3 8 2.500z" stroke="#fff" strokeWidth=".9" />
            </Svg>
            共有
            <Svg w={7} h={5} style={{ marginLeft: 2 }}>
              <path d="M.8 1 3.500 3.800 6.200 1" stroke="#fff" />
            </Svg>
          </Share>
        </TabBar>

        <RibbonBody />

        <FormulaBand>
          <NameBox>
            D2 <Caret />
          </NameBox>
          <Dots>
            <Svg w={3} h={13}>
              <path d="M1.500 0v13" stroke="#999" strokeWidth="2" strokeDasharray="2 3.500" />
            </Svg>
          </Dots>
          <FxBox>
            <Svg w={12} h={12}>
              <path d="m1 1 10 10m0-10L1 11" stroke="#bbb" strokeWidth="1.300" />
            </Svg>
            <Svg w={14} h={12}>
              <path d="m1 7 4 4 8-10" stroke="#bbb" strokeWidth="1.500" />
            </Svg>
            <FxLabel>fx</FxLabel>
          </FxBox>
          <FormulaInput>
            {'=IF(B2<A2,"入力ミス",B2-A2)'}
            <Svg w={10} h={6}>
              <path d="m1 1 4 4 4-4" stroke="#666" strokeWidth="1.500" />
            </Svg>
          </FormulaInput>
        </FormulaBand>

        <SheetArea>
          <Sheet />
          <VScroll>
            <ScrollBtn>
              <Svg w={9} h={5}>
                <path d="M0 5h9L4.500 0z" fill="#333" />
              </Svg>
            </ScrollBtn>
            <VThumb />
            <Spacer />
            <ScrollBtn>
              <Svg w={9} h={5}>
                <path d="M0 0h9L4.500 5z" fill="#333" />
              </Svg>
            </ScrollBtn>
          </VScroll>
        </SheetArea>

        <SheetTabs>
          <TabNav>
            <Svg w={5} h={8}>
              <path d="M5 0v8L0 4z" fill="#bbb" />
            </Svg>
            <Svg w={5} h={8}>
              <path d="M0 0v8l5-4z" fill="#bbb" />
            </Svg>
          </TabNav>
          {SHEETS.map((s) => (
            <SheetTab key={s} $w={70.5}>
              {s}
            </SheetTab>
          ))}
          <SheetTab $w={70} $active>
            Sheet7
          </SheetTab>
          <AddSheet>
            <Svg w={17} h={17}>
              <circle cx="8.500" cy="8.500" r="7.500" stroke="#888" />
              <path d="M8.500 4.500v8M4.500 8.500h8" stroke="#777" />
            </Svg>
          </AddSheet>
          <TabDots>
            <Svg w={3} h={13}>
              <path d="M1.500 0v13" stroke="#aaa" strokeWidth="2" strokeDasharray="2 3.500" />
            </Svg>
          </TabDots>
          <HScroll>
            <HBtn>
              <Svg w={5} h={8}>
                <path d="M5 0v8L0 4z" fill="#333" />
              </Svg>
            </HBtn>
            <HThumb />
            <Spacer />
            <HBtn>
              <Svg w={5} h={8}>
                <path d="M0 0v8l5-4z" fill="#333" />
              </Svg>
            </HBtn>
          </HScroll>
        </SheetTabs>

        <StatusBar>
          <StatusItem $ml={12} $w={75} $track={-1}>準備完了</StatusItem>
          <StatusItem $w={25}>
            <Svg w={12} h={12}>
              <path d="M1 2h10v9H1z" stroke="#666" />
              <path d="M1 1h4v3H1z" fill="#555" />
              <path d="M3 6h6M3 8h6" stroke="#777" strokeDasharray="1 1" />
            </Svg>
          </StatusItem>
          <StatusItem $w={184} $bold $gap={2}>
            <Svg w={15} h={14}>
              <path d="M6 1a6 6 0 0 0-2 11" stroke="#888" strokeDasharray="2 1" />
              <path d="M8 3v5m-3-3h6M5 13l3-5 3 5" stroke="#444" strokeWidth="1.200" />
            </Svg>
            アクセシビリティ: 検討が必要です
          </StatusItem>
          <StatusItem $ml={246} $w={94} $track={1}>平均: 7:50:00</StatusItem>
          <StatusItem $w={95}>データの個数: 5</StatusItem>
          <StatusItem $w={105} $track={0.9}>合計: 23:30:00</StatusItem>
          <StatusItem $w={85} $gap={4}>
            <Svg w={16} h={14}>
              <path d="M0 0h15v10H0z" fill="#444" />
              <circle cx="11" cy="10" r="3.500" fill="#555" stroke="#f2f2f2" />
            </Svg>
            表示設定
          </StatusItem>
          <ViewBtn $on $w={44}>
            <Svg w={13} h={13}>
              <path d="M.5.500h12v12H.5zM.5 4.500h12M.5 8.500h12M4.500.500v12M8.500.500v12" stroke="#777" />
            </Svg>
          </ViewBtn>
          <ViewBtn $w={34}>
            <Svg w={11} h={13}>
              <path d="M.5.500h10v12H.5zM3 4h5M3 6.500h5M3 9h5" stroke="#888" />
            </Svg>
          </ViewBtn>
          <ViewBtn $w={46}>
            <Svg w={13} h={12}>
              <path d="M.5.500h12v11H.5zM4.500.500v6h4v-6" stroke="#888" />
            </Svg>
          </ViewBtn>
          <StatusItem $ml={3}>−</StatusItem>
          <Zoom>
            <ZoomMark />
            <ZoomThumb />
          </Zoom>
          <StatusItem>+</StatusItem>
          <StatusItem $ml={13} $track={0.4}>190%</StatusItem>
        </StatusBar>
      </Win>
    </>
  );
}
